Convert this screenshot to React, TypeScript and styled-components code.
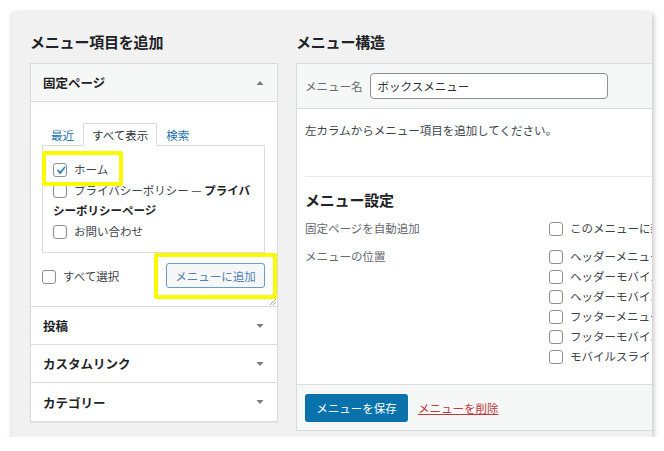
import React from "react";
import styled, { createGlobalStyle } from "styled-components";

const Global = createGlobalStyle`
  html, body { margin: 0; padding: 0; background: #ffffff; }
  body {
    font-family: "Noto Sans CJK JP", "Noto Sans", sans-serif;
    color: #3c434a;
    font-size: 11.5px;
  }
  * { box-sizing: border-box; }
`;

const Frame = styled.div`
  margin: 12px 0 0 12px;
  width: 640px;
  height: 425px;
  background: #f1f1f1;
  box-shadow: 1px 2px 6px rgba(0, 0, 0, 0.28);
  overflow: hidden;
  padding: 19px 0 0 18px;
  display: flex;
  gap: 18px;
  align-items: flex-start;
`;

const Column = styled.div<{ $width: number }>`
  flex: 0 0 ${(p) => p.$width}px;
  width: ${(p) => p.$width}px;
`;

const ColumnTitle = styled.h2`
  margin: 0 0 10px;
  font-size: 15px;
  line-height: 22px;
  font-weight: 700;
  color: #1d2327;
  letter-spacing: -0.2px;
`;

const AccordionBox = styled.div`
  border: 1px solid #dcdcdc;
  background: #fff;
  box-shadow: 0 1px 1px rgba(0, 0, 0, 0.05);
`;

const SectionHeader = styled.div<{ $open?: boolean; $last?: boolean }>`
  height: ${(p) => (p.$open ? 38 : 38)}px;
  border-bottom: ${(p) => (p.$last ? "none" : "1px solid #dcdcdc")};
  background: ${(p) => (p.$open ? "#f6f7f7" : "#ffffff")};
  display: flex;
  align-items: center;
  justify-content: space-between;
  padding: 0 13px 0 12px;
  font-size: 12.5px;
  font-weight: 700;
  color: #1d2327;
`;

const SectionBody = styled.div`
  position: relative;
  height: 205px;
  border-bottom: 1px solid #dcdcdc;
  padding: 21px 12px 0 11px;
`;

const Tabs = styled.div`
  display: flex;
  height: 23px;
  position: relative;
  z-index: 1;
  margin-bottom: -1px;
`;

const Tab = styled.div<{ $active?: boolean }>`
  padding: 0 8px;
  line-height: 22px;
  font-size: 11.5px;
  color: ${(p) => (p.$active ? "#2c3338" : "#2271b1")};
  background: ${(p) => (p.$active ? "#fff" : "transparent")};
  border: 1px solid ${(p) => (p.$active ? "#dcdcdc" : "transparent")};
  border-bottom-color: ${(p) => (p.$active ? "#fff" : "transparent")};
`;

const TabPanel = styled.div`
  border: 1px solid #dcdcdc;
  height: 108px;
  padding: 13px 4px 0 10px;
`;

const ItemRow = styled.div`
  line-height: 20px;
  font-size: 11.5px;
  color: #3c434a;
  margin-bottom: 1px;
  b { font-weight: 700; color: #1d2327; }
`;

const Box = styled.span`
  display: inline-block;
  position: relative;
  width: 14px;
  height: 14px;
  border: 1px solid #8c8f94;
  border-radius: 3px;
  background: #fff;
  vertical-align: -3px;
  margin-right: 7px;
  svg { position: absolute; left: -2px; top: -2px; }
`;

const Check: React.FC<{ checked?: boolean }> = ({ checked }) => (
  <Box>
    {checked && (
      <svg width="17" height="17" viewBox="0 0 20 20">
        <path d="M14.83 4.89l1.34.94-5.81 8.38H9.02L5.78 9.67l1.34-1.25 2.57 2.4z" fill="#3582c4" />
      </svg>
    )}
  </Box>
);

const BodyActions = styled.div`
  margin-top: 10px;
  display: flex;
  align-items: center;
  justify-content: space-between;
`;

const SelectAll = styled.div`
  font-size: 11.5px;
  color: #3c434a;
  line-height: 20px;
`;

const AddButton = styled.div`
  width: 99px;
  height: 25px;
  border: 1px solid #6b9bc9;
  border-radius: 3px;
  background: #f6f7f7;
  color: #4f82b5;
  font-size: 11.5px;
  display: flex;
  align-items: center;
  justify-content: center;
`;

const Highlight = styled.div<{ $top: number; $left: number; $w: number; $h: number }>`
  position: absolute;
  top: ${(p) => p.$top}px;
  left: ${(p) => p.$left}px;
  width: ${(p) => p.$w}px;
  height: ${(p) => p.$h}px;
  border: 4px solid #fbfb00;
  border-radius: 2px;
  pointer-events: none;
`;

const Grip = styled.svg`
  position: absolute;
  right: 1px;
  bottom: 1px;
`;

const Triangle: React.FC<{ up?: boolean }> = ({ up }) => (
  <svg width="8" height="6" viewBox="0 0 8 6">
    <polygon points={up ? "4,1 7.5,5 0.5,5" : "0.5,1 7.5,1 4,5"} fill="#787c82" />
  </svg>
);

/* Right column */

const StructurePanel = styled.div`
  height: 368px;
  border: 1px solid #dcdcdc;
  border-right: none;
  background: #fff;
  display: flex;
  flex-direction: column;
`;

const NameBar = styled.div`
  height: 45px;
  background: #f6f7f7;
  border-bottom: 1px solid #dcdcdc;
  display: flex;
  align-items: center;
  padding: 0 8px;
  gap: 7px;
`;

const NameLabel = styled.span`
  font-size: 11.5px;
  color: #646970;
`;

const NameInput = styled.input`
  width: 238px;
  height: 26px;
  border: 1px solid #8c8f94;
  border-radius: 4px;
  padding: 0 7px;
  font-family: inherit;
  font-size: 11.5px;
  color: #2c3338;
  background: #fff;
  outline: none;
`;

const StructureBody = styled.div`
  flex: 1;
  padding: 0 0 0 8px;
`;

const Instructions = styled.p`
  margin: 11px 0 0;
  line-height: 20px;
  font-size: 11.5px;
  color: #3c434a;
`;

const Divider = styled.div`
  margin-top: 36px;
  border-top: 1px solid #eaeaea;
`;

const SettingsTitle = styled.h3`
  margin: 12px 0 0;
  font-size: 15px;
  line-height: 22px;
  font-weight: 700;
  color: #1d2327;
  letter-spacing: -0.2px;
`;

const SettingsGrid = styled.div`
  margin-top: 7px;
  display: grid;
  grid-template-columns: 244px 1fr;
  row-gap: 8px;
`;

const SettingLabel = styled.div`
  font-size: 11.5px;
  line-height: 20px;
  color: #646970;
`;

const OptionRow = styled.div`
  font-size: 11.5px;
  line-height: 20px;
  color: #3c434a;
  white-space: nowrap;
`;

const Footer = styled.div`
  height: 46px;
  background: #f6f7f7;
  border-top: 1px solid #dcdcdc;
  display: flex;
  align-items: flex-start;
  padding: 9px 8px 0;
  gap: 10px;
`;

const PrimaryButton = styled.div`
  width: 103px;
  height: 28px;
  border-radius: 3px;
  background: #0a72aa;
  color: #fff;
  font-size: 11.5px;
  display: flex;
  align-items: center;
  justify-content: center;
`;

const DeleteLink = styled.span`
  font-size: 11.5px;
  line-height: 28px;
  color: #c0393b;
  text-decoration: underline;
`;

const positions = [
  "ヘッダーメニュー",
  "ヘッダーモバイルメニュー",
  "ヘッダーモバイルボタン",
  "フッターメニュー",
  "フッターモバイルボタン",
  "モバイルスライドインメニュー",
];

export default function App() {
  return (
    <>
      <Global />
      <Frame>
        <Column $width={248}>
          <ColumnTitle>メニュー項目を追加</ColumnTitle>
          <AccordionBox>
            <SectionHeader $open>
              <span>固定ページ</span>
              <Triangle up />
            </SectionHeader>
            <SectionBody>
              <Tabs>
                <Tab>最近</Tab>
                <Tab $active>すべて表示</Tab>
                <Tab>検索</Tab>
              </Tabs>
              <TabPanel>
                <ItemRow>
                  <Check checked />
                  ホーム
                </ItemRow>
                <ItemRow>
                  <Check />
                  プライバシーポリシー — <b>プライバシーポリシーページ</b>
                </ItemRow>
                <ItemRow>
                  <Check />
                  お問い合わせ
                </ItemRow>
              </TabPanel>
              <BodyActions>
                <SelectAll>
                  <Check />
                  すべて選択
                </SelectAll>
                <AddButton>メニューに追加</AddButton>
              </BodyActions>
              <Highlight $top={49} $left={11} $w={81} $h={35} />
              <Highlight $top={151} $left={123} $w={123} $h={46} />
              <Grip width="7" height="7" viewBox="0 0 7 7">
                <line x1="1" y1="7" x2="7" y2="1" stroke="#a0a5aa" strokeWidth="1" />
                <line x1="4" y1="7" x2="7" y2="4" stroke="#a0a5aa" strokeWidth="1" />
              </Grip>
            </SectionBody>
            <SectionHeader>
              <span>投稿</span>
              <Triangle />
            </SectionHeader>
            <SectionHeader>
              <span>カスタムリンク</span>
              <Triangle />
            </SectionHeader>
            <SectionHeader $last>
              <span>カテゴリー</span>
              <Triangle />
            </SectionHeader>
          </AccordionBox>
        </Column>
        <Column $width={420}>
          <ColumnTitle>メニュー構造</ColumnTitle>
          <StructurePanel>
            <NameBar>
              <NameLabel>メニュー名</NameLabel>
              <NameInput defaultValue="ボックスメニュー" readOnly />
            </NameBar>
            <StructureBody>
              <Instructions>左カラムからメニュー項目を追加してください。</Instructions>
              <Divider />
              <SettingsTitle>メニュー設定</SettingsTitle>
              <SettingsGrid>
                <SettingLabel>固定ページを自動追加</SettingLabel>
                <OptionRow>
                  <Check />
                  このメニューに新しい上位ページを自動的に追加
                </OptionRow>
                <SettingLabel>メニューの位置</SettingLabel>
                <div>
                  {positions.map((p) => (
                    <OptionRow key={p}>
                      <Check />
                      {p}
                    </OptionRow>
                  ))}
                </div>
              </SettingsGrid>
            </StructureBody>
            <Footer>
              <PrimaryButton>メニューを保存</PrimaryButton>
              <DeleteLink>メニューを削除</DeleteLink>
            </Footer>
          </StructurePanel>
        </Column>
      </Frame>
    </>
  );
}
